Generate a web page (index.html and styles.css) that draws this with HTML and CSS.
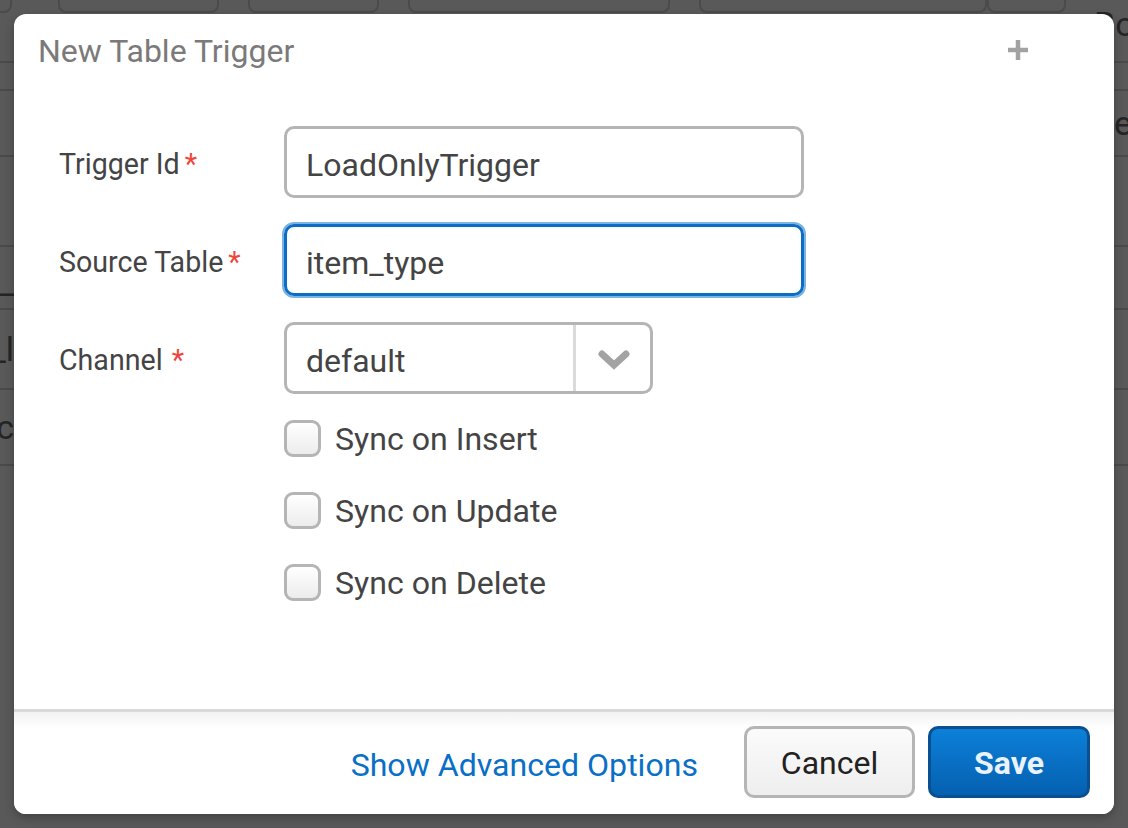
FILE: index.html
```html
<!DOCTYPE html>
<html>
<head>
<meta charset="utf-8">
<title>New Table Trigger</title>
<link rel="stylesheet" href="styles.css">
</head>
<body>
<div class="backdrop">
  <div class="toolbar">
    <span class="tb tb1"></span>
    <span class="tb tb2"></span>
    <span class="tb tb3"></span>
    <span class="tb tb4"></span>
    <span class="tb tb5"></span>
    <span class="tb tb6"></span>
  </div>
  <div class="rows">
    <div class="row h1"><span class="lc"></span><span class="rc">Bo</span></div>
    <div class="row h2"><span class="lc"></span><span class="rc"></span></div>
    <div class="row h3"><span class="lc"></span><span class="rc">e</span></div>
    <div class="row h4"><span class="lc"></span><span class="rc"></span></div>
    <div class="row h5"><span class="lc">log_</span><span class="rc"></span></div>
    <div class="row h6"><span class="lc">_l</span><span class="rc"></span></div>
    <div class="row h7"><span class="lc">c</span><span class="rc"></span></div>
  </div>
</div>

<div class="overlay">
  <div class="dialog">
    <div class="header">
      <span class="title">New Table Trigger</span>
      <svg class="plus" width="22" height="22" viewBox="0 0 22 22" aria-hidden="true">
        <path d="M11 1 V21 M1 11 H21" stroke="#a2a2a2" stroke-width="4.5" fill="none"/>
      </svg>
    </div>

    <div class="body">
      <div class="form-row">
        <div class="cap">Trigger Id<span class="req">*</span></div>
        <div class="textfield">LoadOnlyTrigger</div>
      </div>
      <div class="form-row">
        <div class="cap">Source Table<span class="req">*</span></div>
        <div class="textfield focused">item_type</div>
      </div>
      <div class="form-row">
        <div class="cap">Channel<span class="req sp">*</span></div>
        <div class="combo">
          <span class="combo-value">default</span>
          <span class="combo-btn">
            <svg width="32" height="20" viewBox="0 0 32 20" aria-hidden="true">
              <polyline points="4,4 16,15 28,4" stroke="#a3a3a3" stroke-width="7" fill="none" stroke-linejoin="miter" stroke-linecap="round"/>
            </svg>
          </span>
        </div>
      </div>

      <div class="checks">
        <div class="check"><span class="box"></span><span class="check-label">Sync on Insert</span></div>
        <div class="check"><span class="box"></span><span class="check-label">Sync on Update</span></div>
        <div class="check"><span class="box"></span><span class="check-label">Sync on Delete</span></div>
      </div>
    </div>

    <div class="footer">
      <a class="link">Show Advanced Options</a>
      <button class="btn cancel">Cancel</button>
      <button class="btn save">Save</button>
    </div>
  </div>
</div>
</body>
</html>
```

FILE: styles.css
```css
html, body {
  margin: 0;
  padding: 0;
}

body {
  width: 1128px;
  height: 828px;
  overflow: hidden;
  position: relative;
  background: #595959;
  font-family: Roboto, "Liberation Sans", sans-serif;
}

/* ---------- dimmed page behind the modal ---------- */
.backdrop {
  width: 1128px;
  height: 828px;
  display: flex;
  flex-direction: column;
}

.toolbar {
  height: 14px;
  display: flex;
  overflow: hidden;
}

.tb {
  display: block;
  height: 40px;
  margin-top: -27px;
  border: 2px solid #4b4b4b;
  border-radius: 8px;
  box-sizing: border-box;
}
.tb1 { width: 120px; margin-left: -108px; }
.tb2 { width: 161px; margin-left: 46px; }
.tb3 { width: 131px; margin-left: 29px; }
.tb4 { width: 262px; margin-left: 29px; }
.tb5 { width: 288px; margin-left: 29px; }
.tb6 { width: 79px; margin-left: 0; }

.rows {
  display: flex;
  flex-direction: column;
}

.row {
  display: flex;
  justify-content: space-between;
  align-items: center;
  border-bottom: 2px solid #4a4a4a;
  box-sizing: border-box;
  color: #252525;
  font-size: 34px;
}
.h1 { height: 49px; align-items: flex-start; }
.h2 { height: 28px; }
.h3 { height: 66px; }
.h4 { height: 90px; }
.h5 { height: 63px; }
.h6 { height: 80px; }
.h7 { height: 76px; }

.lc {
  width: 14px;
  overflow: hidden;
  display: flex;
  justify-content: flex-end;
  white-space: nowrap;
}
.h5 .lc { padding-top: 8px; }
.rc {
  width: 14px;
  white-space: nowrap;
  overflow: hidden;
}
.h1 .rc { margin-top: -10px; width: 34px; }

/* ---------- modal ---------- */
.overlay {
  position: absolute;
  inset: 0;
  display: flex;
  padding: 14px;
  box-sizing: border-box;
}

.dialog {
  width: 1100px;
  height: 800px;
  background: #fff;
  border-radius: 12px;
  box-shadow: 0 4px 10px rgba(0, 0, 0, 0.25);
  display: flex;
  flex-direction: column;
  overflow: hidden;
}

.header {
  display: flex;
  justify-content: space-between;
  align-items: center;
  height: 40px;
  padding: 17px 85px 0 24px;
}

.title {
  font-size: 32px;
  line-height: 40px;
  color: #7a7a7a;
}

.plus {
  display: block;
  margin-top: -2px;
}

.body {
  flex: 1;
  padding: 55px 0 0 45px;
  display: flex;
  flex-direction: column;
  gap: 26px;
}

.form-row {
  display: flex;
  align-items: center;
  height: 72px;
}

.cap {
  width: 225px;
  font-size: 28.6px;
  color: #444;
  padding-top: 4px;
}

.req {
  color: #ed473b;
  margin-left: 5px;
}
.req.sp { margin-left: 9px; }

.textfield {
  width: 520px;
  height: 72px;
  box-sizing: border-box;
  border: 3px solid #b5b5b5;
  border-radius: 10px;
  padding: 5px 19px 0;
  font-size: 32px;
  color: #444;
  display: flex;
  align-items: center;
}

.textfield.focused {
  border-color: #0b6dc3;
  box-shadow: 0 0 0 2px #7ab4e2;
}

.combo {
  width: 369px;
  height: 72px;
  box-sizing: border-box;
  border: 3px solid #b5b5b5;
  border-radius: 10px;
  display: flex;
  align-items: stretch;
  font-size: 32px;
  color: #444;
}

.combo-value {
  flex: 1;
  display: flex;
  align-items: center;
  padding: 5px 0 0 19px;
  border-right: 3px solid #dadada;
}

.combo-btn {
  width: 74px;
  display: flex;
  align-items: center;
  justify-content: center;
}

.combo-btn svg { display: block; margin-left: 2px; margin-top: 3px; }

.checks {
  display: flex;
  flex-direction: column;
  gap: 35px;
  padding-left: 225px;
}

.check {
  display: flex;
  align-items: center;
  height: 37px;
}

.box {
  width: 37px;
  height: 37px;
  box-sizing: border-box;
  border: 3px solid #b5b5b5;
  border-radius: 9px;
  background: linear-gradient(#ffffff, #ececec);
}

.check-label {
  margin-left: 14px;
  font-size: 32.1px;
  color: #444;
}

.footer {
  height: 105px;
  box-sizing: border-box;
  border-top: 3px solid #d9d9d9;
  background: linear-gradient(#f2f2f2, #ffffff 16px);
  display: flex;
  align-items: center;
  justify-content: flex-end;
  padding: 14px 24px 16px 0;
}

.link {
  font-size: 32.1px;
  color: #0a6fc6;
  margin-right: 46px;
  padding-top: 5px;
}

.btn {
  height: 72px;
  box-sizing: border-box;
  border-radius: 10px;
  font-family: Roboto, "Liberation Sans", sans-serif;
  font-size: 32px;
  padding: 2px 0 0;
}

.cancel {
  width: 171px;
  border: 3px solid #b5b5b5;
  background: linear-gradient(#fbfbfb, #eeeeee);
  color: #222;
  margin-right: 13px;
}

.save {
  width: 162px;
  border: 3px solid #0a4f8f;
  background: linear-gradient(#0c80d8, #0560b0);
  color: #eaf3fb;
  font-weight: bold;
}
```
